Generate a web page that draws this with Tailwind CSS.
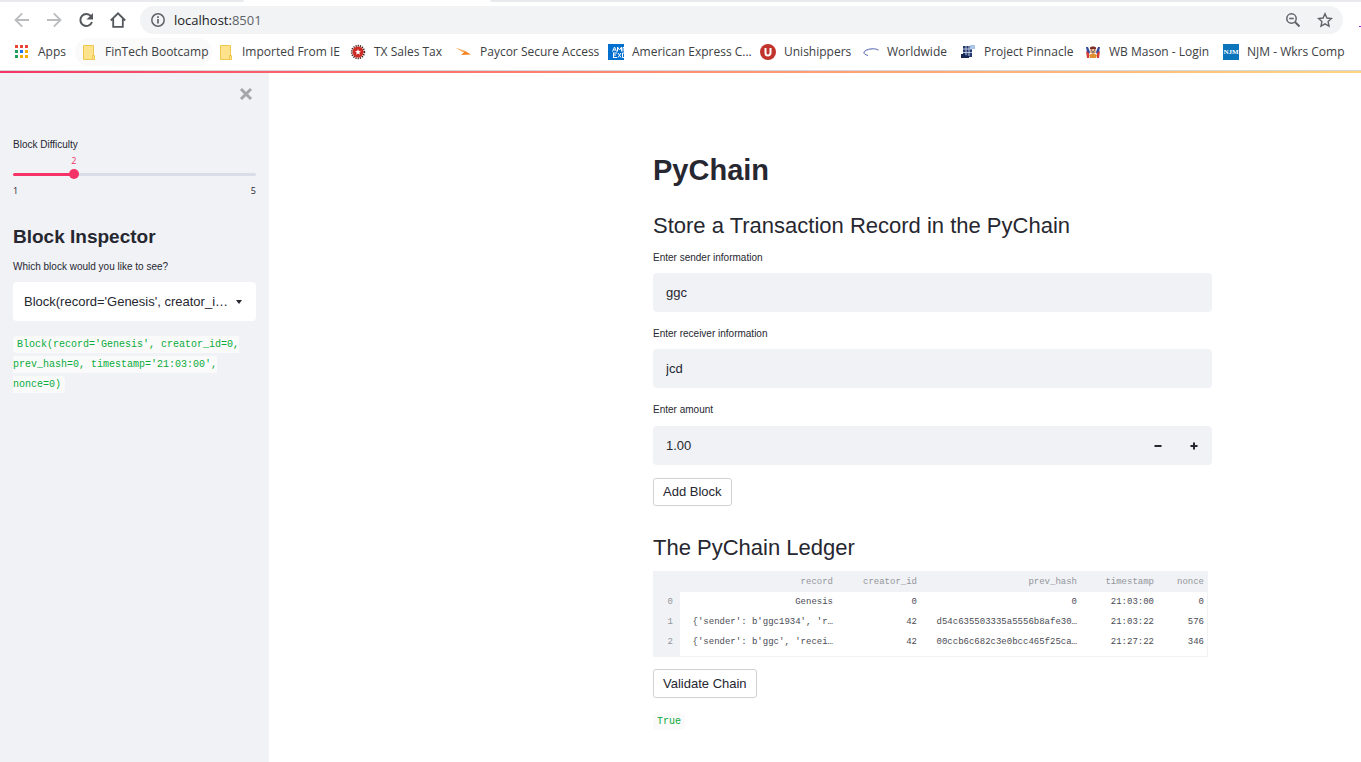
<!DOCTYPE html>
<html lang="en">
<head>
<meta charset="utf-8">
<title>PyChain</title>
<script src="https://cdn.jsdelivr.net/npm/@tailwindcss/browser@4"></script>
</head>
<body class="flex min-h-screen flex-col bg-white font-['Liberation_Sans',sans-serif] text-[#262730]">
<header class="font-['Open_Sans',sans-serif] text-[#3c4043]">
  <div class="flex h-0.5 bg-white">
    <div class="w-[244px] rounded-br bg-[#e8eaed]"></div>
    <div class="w-[246px]"></div>
    <div class="flex-1 rounded-bl bg-[#e8eaed]"></div>
  </div>
  <div class="flex h-9 items-center">
    <nav class="flex w-[140px] shrink-0 items-center gap-4 pl-3.5" aria-label="Browser">
      <button aria-label="Back" class="size-4"><svg viewBox="0 0 16 16" class="size-4" fill="none" stroke="#babcbe" stroke-width="1.8"><path d="M15 8H2M8.2 1.3L1.5 8l6.700 6.700"/></svg></button>
      <button aria-label="Forward" class="size-4"><svg viewBox="0 0 16 16" class="size-4" fill="none" stroke="#babcbe" stroke-width="1.8"><path d="M1 8h13M7.800 1.300L14.500 8l-6.700 6.700"/></svg></button>
      <button aria-label="Reload" class="size-4"><svg viewBox="0 0 16 16" class="size-4"><path d="M13 4.200A6 6 0 1 0 14 10" fill="none" stroke="#54585c" stroke-width="2"/><path d="M15 1v6.500H8.500z" fill="#54585c"/></svg></button>
      <button aria-label="Home" class="size-4"><svg viewBox="0 0 16 16" class="size-4" fill="none" stroke="#54585c" stroke-width="1.800"><path d="M.8 8.500L8 1.300l7.200 7.200M3.200 7v7.800h9.600V7"/></svg></button>
    </nav>
    <div class="flex h-7 flex-1 items-center rounded-full bg-[#f1f3f4] pr-2.5 pl-2.5">
      <svg viewBox="0 0 16 16" class="size-4" fill="none" stroke="#5f6368" stroke-width="1.500"><circle cx="8" cy="8" r="6.200"/><path d="M8 7v4.500M8 4.300v1.600" stroke-width="1.700"/></svg>
      <div class="flex-1 pl-2 text-[13px] leading-7 text-[#202124]">localhost:<span class="text-[#5f6368]">8501</span></div>
      <button aria-label="Zoom" class="mr-4"><svg viewBox="0 0 16 16" class="size-4" fill="none" stroke="#5f6368" stroke-width="1.500"><circle cx="6.500" cy="6.500" r="4.700"/><path d="M10 10l4.500 4.500" stroke-width="1.900"/><path d="M4.200 6.500h4.600"/></svg></button>
      <button aria-label="Bookmark this page"><svg viewBox="0 0 16 16" class="size-4" fill="none" stroke="#5f6368" stroke-width="1.400"><path d="M8 1.800l1.900 4.200 4.600.5-3.400 3.100.9 4.500L8 11.800l-4 2.300.9-4.500L1.500 6.500 6.100 6z"/></svg></button>
    </div>
    <div class="flex h-7 w-[18px] items-center justify-end"><span class="mt-3 h-px w-0.5 bg-[#8a2be2]"></span></div>
  </div>
  <nav class="mb-1 flex h-7 items-center overflow-hidden text-[12px] whitespace-nowrap" aria-label="Bookmarks">
    <a href="#" class="flex w-[75px] shrink-0 items-center gap-2 pl-3.5">
      <svg viewBox="0 0 16 16" class="size-4"><g fill="#ea4335"><path d="M1 1h3v3H1zM6 1h3v3H6zM11 1h3v3h-3z"/></g><path d="M1 6h3v3H1zM1 11h3v3H1z" fill="#1e9e58"/><path d="M6 6h3v3H6z" fill="#1a73e8"/><path d="M11 6h3v3h-3zM6 11h3v3H6zM11 11h3v3h-3z" fill="#f9ab00"/></svg>Apps</a>
    <a href="#" class="flex h-7 w-[137px] shrink-0 items-center gap-2 rounded-full bg-[#fafafa] pl-1.5">
      <svg viewBox="0 0 16 16" class="size-4"><path d="M2.500 1.500h10v10h1v4h-11z" fill="#ffe38c" stroke="#edc851"/><path d="M11.500 15v-3.500h1.500" fill="none" stroke="#edc851"/></svg>FinTech Bootcamp</a>
    <a href="#" class="flex w-[138px] shrink-0 items-center gap-2 pl-1.5">
      <svg viewBox="0 0 16 16" class="size-4"><path d="M2.500 1.500h10v10h1v4h-11z" fill="#ffe38c" stroke="#edc851"/><path d="M11.500 15v-3.500h1.500" fill="none" stroke="#edc851"/></svg>Imported From IE</a>
    <a href="#" class="flex w-[106px] shrink-0 items-center gap-2">
      <svg viewBox="0 0 16 16" class="size-4"><circle cx="8" cy="8" r="6.300" fill="none" stroke="#4a2020" stroke-width="1.800" stroke-dasharray="1.200 1"/><circle cx="8" cy="8" r="5.500" fill="#cf2a24"/><path d="M8 5l.8 2.100 2.200.1-1.700 1.400.6 2.200L8 9.600l-1.900 1.200.6-2.200L5 7.200l2.200-.1z" fill="#fff"/></svg>TX Sales Tax</a>
    <a href="#" class="flex w-[152px] shrink-0 items-center gap-2">
      <svg viewBox="0 0 16 16" class="size-4"><path d="M0 4l9 3 6 3.500-10 .5 3-2.500z" fill="#f58220"/><path d="M0 4l9 3-1 1.500z" fill="#fbb360"/></svg>Paycor Secure Access</a>
    <a href="#" class="flex w-[151px] shrink-0 items-center gap-2">
      <svg viewBox="0 0 16 16" class="size-4"><path d="M0 0h16v16H0z" fill="#016fd0"/><g fill="none" stroke="#fff"><path d="M4.500 7.500L6.500 3l2 4.500M5.500 6h2M9.500 7.500V3l2 3 2-3v4.500M16 3.500h-1v4M5.500 9v4.500M5 9h4M5 11h3M5 13.500h4M10 9l3 4.500M13 9l-3 4.500M14.500 9v4.500H16M14.500 9H16"/></g></svg>American Express C...</a>
    <a href="#" class="flex w-[103px] shrink-0 items-center gap-2 pl-px">
      <svg viewBox="0 0 16 16" class="size-4"><circle cx="8" cy="8" r="8" fill="#c0342b"/><path d="M5.500 4v5a2.500 2.500 0 0 0 5 0V4" fill="none" stroke="#fff" stroke-width="2"/></svg>Unishippers</a>
    <a href="#" class="flex w-[98px] shrink-0 items-center gap-2 pl-px">
      <svg viewBox="0 0 16 16" class="size-4" fill="none"><path d="M5 11.500C-1 10 0 6.500 6 5.200c4-.8 8-.4 9.500 1" stroke="#5b6bb0"/><path d="M1.500 10C0 8 4 5.500 9 5" stroke="#9aa5d4"/></svg>Worldwide</a>
    <a href="#" class="flex w-[125px] shrink-0 items-center gap-2">
      <svg viewBox="0 0 16 16" class="size-4"><path d="M3 2h9v11H3z" fill="#25396f"/><path d="M10 1h5v4h-5z" fill="#a9c4e6"/><path d="M1 10h4v2h4v2H1z" fill="#17264f"/><path d="M3 5h9M3 8.500h9M6 2v9M9 2v10" stroke="#dbe3f2" stroke-width=".8"/></svg>Project Pinnacle</a>
    <a href="#" class="flex w-[138px] shrink-0 items-center gap-2">
      <svg viewBox="0 0 16 16" class="size-4"><path d="M1 3h2l2 5-2 5zM15 3h-2l-2 5 2 5z" fill="#34479b"/><path d="M1 7l3 2v5H2zM15 7l-3 2v5h2z" fill="#d33b35"/><path d="M5 3h6v6H5z" fill="#f2bd8d"/><path d="M5 4c0-2 6-2 6 0v1H5z" fill="#7b2f28"/><path d="M4 11l4-2 4 2-1 3H5z" fill="#df8f2f"/><path d="M6 6h1M9 6h1M6.500 8h3" stroke="#242b58"/></svg>WB Mason - Login</a>
    <a href="#" class="flex shrink-0 items-center gap-2">
      <span class="flex size-4 items-center justify-center bg-[#0b74bb] font-['Liberation_Serif',serif] text-[7px] leading-4 font-bold text-white">NJM</span>NJM - Wkrs Comp</a>
  </nav>
  <div class="h-px bg-[#d5d7da]"></div>
  <div class="h-0.5 bg-gradient-to-r from-[#f63366] to-[#fffd80] to-130%"></div>
</header>

<div class="flex flex-1">
  <aside class="w-[269px] shrink-0 bg-[#f0f2f6] px-[13px] pt-3.5">
    <div class="flex justify-end pr-[3px]">
      <button aria-label="Close sidebar" class="size-3.5"><svg viewBox="0 0 14 14" class="size-3.5" stroke="#a3a6aa" stroke-width="3"><path d="M2 2l10 10M12 2L2 12"/></svg></button>
    </div>
    <label for="difficulty" class="mt-9 block text-[10px] leading-4">Block Difficulty</label>
    <output for="difficulty" class="block w-1/2 text-center font-['Open_Sans',sans-serif] text-[9px] leading-4 text-[#f63366]">2</output>
    <div class="grid h-2.5 items-center">
      <div class="col-start-1 row-start-1 h-[3px] rounded-full bg-gradient-to-r from-[#f63366] from-25% to-[#d9dde7] to-25%"></div>
      <input id="difficulty" type="range" min="1" max="5" value="2" class="col-start-1 row-start-1 -mx-[5px] h-2.5 appearance-none bg-transparent [&::-webkit-slider-thumb]:size-2.5 [&::-webkit-slider-thumb]:appearance-none [&::-webkit-slider-thumb]:rounded-full [&::-webkit-slider-thumb]:bg-[#f63366]">
    </div>
    <div class="mt-1 flex justify-between font-['Open_Sans',sans-serif] text-[9px] leading-4"><span>1</span><span>5</span></div>
    <h2 class="mt-6 text-[19px] leading-7 font-bold">Block Inspector</h2>
    <label for="block" class="mt-2 block text-[10px] leading-4">Which block would you like to see?</label>
    <div class="mt-[7px] grid items-center">
      <select id="block" class="col-start-1 row-start-1 h-[39px] w-full appearance-none overflow-hidden rounded bg-white pr-6 pl-[11px] text-[13px] text-ellipsis">
        <option>Block(record='Genesis', creator_id=0, prev_hash=0, timestamp='21:03:00', nonce=0)</option>
      </select>
      <svg viewBox="0 0 6 4" class="pointer-events-none col-start-1 row-start-1 mr-3.5 h-1 w-1.5 justify-self-end"><path d="M0 0h6L3 4z" fill="#262730"/></svg>
    </div>
    <p class="mt-3.5 font-['Liberation_Mono',monospace] text-[10px] leading-5 text-[#09ab3b]"><code class="rounded bg-[#fafafa] px-1 py-[3px] font-['Liberation_Mono',monospace]">Block(record='Genesis', creator_id=0, prev_hash=0, timestamp='21:03:00', nonce=0)</code></p>
  </aside>

  <main class="min-w-0 flex-1 pt-[79px] pr-[149px] pb-8 pl-[384px]">
    <h1 class="text-[29px] leading-9 font-bold">PyChain</h1>
    <h2 class="mt-6 text-[22px] leading-7">Store a Transaction Record in the PyChain</h2>
    <label for="sender" class="mt-2.5 block text-[10px] leading-4">Enter sender information</label>
    <input id="sender" type="text" value="ggc" class="mt-[7px] block h-[39px] w-full rounded bg-[#f0f2f6] px-[13px] text-[13px]">
    <label for="receiver" class="mt-3.5 block text-[10px] leading-4">Enter receiver information</label>
    <input id="receiver" type="text" value="jcd" class="mt-[7px] block h-[39px] w-full rounded bg-[#f0f2f6] px-[13px] text-[13px]">
    <label for="amount" class="mt-3.5 block text-[10px] leading-4">Enter amount</label>
    <div class="mt-2 flex h-[39px] overflow-hidden rounded bg-[#f0f2f6]">
      <input id="amount" type="number" step="0.01" value="1.00" class="min-w-0 flex-1 [appearance:textfield] px-[13px] text-[13px]">
      <button aria-label="Decrease amount" class="flex w-9 items-center justify-center"><svg viewBox="0 0 8 8" class="size-2" stroke="#262730" stroke-width="2"><path d="M.5 4h7"/></svg></button>
      <button aria-label="Increase amount" class="flex w-9 items-center justify-center"><svg viewBox="0 0 8 8" class="size-2" stroke="#262730" stroke-width="2"><path d="M.5 4h7M4 .5v7"/></svg></button>
    </div>
    <button class="mt-[13px] block h-7 rounded-[3px] border border-[#d0d1d4] px-[9px] text-[13px]">Add Block</button>
    <h2 class="mt-7 text-[22px] leading-7">The PyChain Ledger</h2>
    <div class="mt-[9px] mr-1 border-r border-b border-[#f0f2f6]">
      <table class="w-full table-fixed text-right font-['Liberation_Mono',monospace] text-[9px] leading-5 text-[#4b4c54]">
        <colgroup><col class="w-[27px]"><col class="w-[156px]"><col class="w-[84px]"><col><col class="w-[77px]"><col class="w-[50px]"></colgroup>
        <thead class="bg-[#f0f2f6] text-[#93959b]"><tr class="h-[21px]">
          <th></th><th class="pr-[3px] font-normal">record</th><th class="pr-[3px] font-normal">creator_id</th><th class="pr-[3px] font-normal">prev_hash</th><th class="pr-[3px] font-normal">timestamp</th><th class="pr-[3px] font-normal">nonce</th></tr></thead>
        <tbody>
          <tr><th class="bg-[#f0f2f6] pr-[7px] font-normal text-[#93959b]">0</th><td class="pr-[3px]">Genesis</td><td class="pr-[3px]">0</td><td class="pr-[3px]">0</td><td class="pr-[3px]">21:03:00</td><td class="pr-[3px]">0</td></tr>
          <tr><th class="bg-[#f0f2f6] pr-[7px] font-normal text-[#93959b]">1</th><td class="pr-[3px]">{'sender': b'ggc1934', 'r…</td><td class="pr-[3px]">42</td><td class="pr-[3px]">d54c635503335a5556b8afe30…</td><td class="pr-[3px]">21:03:22</td><td class="pr-[3px]">576</td></tr>
          <tr><th class="bg-[#f0f2f6] pr-[7px] font-normal text-[#93959b]">2</th><td class="pr-[3px]">{'sender': b'ggc', 'recei…</td><td class="pr-[3px]">42</td><td class="pr-[3px]">00ccb6c682c3e0bcc465f25ca…</td><td class="pr-[3px]">21:27:22</td><td class="pr-[3px]">346</td></tr>
        </tbody>
      </table>
      <div class="h-1 w-[27px] bg-[#f0f2f6]"></div>
    </div>
    <button class="mt-3 block h-[29px] rounded-[3px] border border-[#d0d1d4] px-[9px] text-[13px]">Validate Chain</button>
    <p class="mt-3.5 font-['Liberation_Mono',monospace] text-[10px] leading-5 text-[#09ab3b]"><code class="rounded bg-[#fafafa] px-1 py-[3px] font-['Liberation_Mono',monospace]">True</code></p>
  </main>
</div>
</body>
</html>
